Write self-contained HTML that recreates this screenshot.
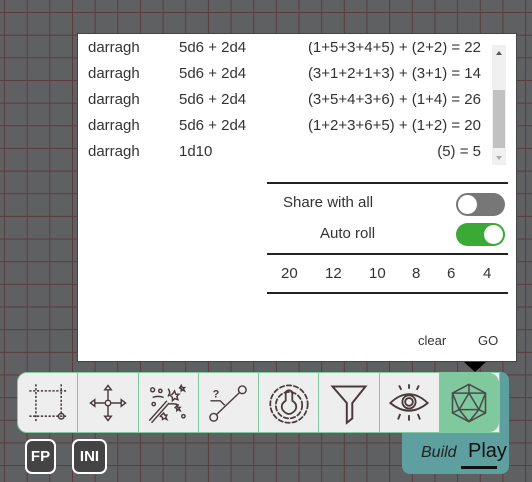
<!DOCTYPE html>
<html><head><meta charset="utf-8"><style>
*{margin:0;padding:0;box-sizing:border-box}
body{width:532px;height:482px;overflow:hidden;position:relative;font-family:"Liberation Sans","DejaVu Sans",sans-serif;color:#333;
background-color:#5f6062;
background-image:linear-gradient(to right,#5a3b3f 1px,transparent 1px),linear-gradient(to bottom,#5a3b3f 1px,transparent 1px);
background-size:22.67px 22.67px;background-position:4px 12px}
.panel{position:absolute;left:77px;top:33px;width:440px;height:329px;background:#fff;border:1px solid #444}
.clip{position:absolute;left:0;top:8px;width:420px;height:130px;overflow:hidden}
.row{position:absolute;left:10px;font-size:15px;height:26px;line-height:26px;width:393px}
.row span{position:absolute}
.c1{left:0}.c2{left:91px}.c3{right:0;text-align:right}
.sb{position:absolute;left:414px;top:11px;width:14px;height:120px;background:#f0f0f0}
.thumb{position:absolute;left:1px;top:45px;width:12px;height:58px;background:#c1c1c1}
.hl{position:absolute;left:189px;width:241px;height:2px;background:#222}
.lab{position:absolute;font-size:15px}
.tg{position:absolute;left:378px;width:49px;height:23px;border-radius:12px}
.tg i{position:absolute;top:2px;width:19px;height:19px;border-radius:50%;background:#fff}
.tb{position:absolute;left:17px;top:372px;width:483px;height:61px;display:flex;border:1px solid #7fc9a0;border-radius:10px 0 0 10px;overflow:hidden;background:#eeeeee}
.tb div{flex:1;border-right:1px solid #7fc9a0;display:flex;align-items:center;justify-content:center}
.tb div:last-child{border:none;background:#80c99e;border-radius:0 10px 10px 0}
.teal{position:absolute;left:402px;top:372px;width:107px;height:102px;background:#5e9fa0;border-radius:8px}
.sq{position:absolute;top:439px;height:35px;border:2px solid #fff;border-radius:7px;background:#444;color:#fff;font-size:15px;font-weight:bold;line-height:31px;text-align:center}
</style></head><body>
<div class="panel">
 <div class="clip">
 <div class="row" style="top:-7px"><span class="c1">darragh</span><span class="c2">5d6 + 2d4</span><span class="c3">(1+5+3+4+5) + (2+2) = 22</span></div>
 <div class="row" style="top:19px"><span class="c1">darragh</span><span class="c2">5d6 + 2d4</span><span class="c3">(3+1+2+1+3) + (3+1) = 14</span></div>
 <div class="row" style="top:45px"><span class="c1">darragh</span><span class="c2">5d6 + 2d4</span><span class="c3">(3+5+4+3+6) + (1+4) = 26</span></div>
 <div class="row" style="top:71px"><span class="c1">darragh</span><span class="c2">5d6 + 2d4</span><span class="c3">(1+2+3+6+5) + (1+2) = 20</span></div>
 <div class="row" style="top:97px"><span class="c1">darragh</span><span class="c2">1d10</span><span class="c3">(5) = 5</span></div>
 </div>
 <div class="sb"><div class="thumb"></div><div style="position:absolute;left:4px;top:6px;border:3px solid transparent;border-bottom:4px solid #555;border-top:0"></div><div style="position:absolute;left:4px;top:111px;border:3px solid transparent;border-top:4px solid #aaa;border-bottom:0"></div></div>
 <div class="hl" style="top:148px"></div>
 <div class="lab" style="left:205px;top:160px">Share with all</div>
 <div class="tg" style="top:159px;background:#777"><i style="left:2px"></i></div>
 <div class="lab" style="left:242px;top:191px">Auto roll</div>
 <div class="tg" style="top:189px;background:#3aa935"><i style="left:28px"></i></div>
 <div class="hl" style="top:219px"></div>
 <div class="lab" style="left:203px;top:231px">20</div>
 <div class="lab" style="left:247px;top:231px">12</div>
 <div class="lab" style="left:291px;top:231px">10</div>
 <div class="lab" style="left:334px;top:231px">8</div>
 <div class="lab" style="left:369px;top:231px">6</div>
 <div class="lab" style="left:405px;top:231px">4</div>
 <div class="hl" style="top:258px"></div>
 <div class="lab" style="left:340px;top:299px;font-size:13px">clear</div>
 <div class="lab" style="left:400px;top:299px;font-size:13px">GO</div>
</div>
<div style="position:absolute;left:464px;top:362px;border:11px solid transparent;border-top:10px solid #000;border-bottom:0"></div>
<div class="teal"></div>
<div class="tb">
 <div><svg width="44" height="44" viewBox="0 0 40 40" fill="none" stroke="#4a3a3c" stroke-width="1.4" stroke-dasharray="2 1.5"><path d="M3 9H37M3 32H37M9 3V38M32 3V29"/><circle cx="32" cy="32" r="2.5" stroke-dasharray="none"/></svg></div>
 <div><svg width="44" height="44" viewBox="0 0 40 40" fill="none" stroke="#4a3a3c" stroke-width="1.3"><circle cx="20" cy="20" r="2.5"/><path d="M20 17V8h-3l3-4 3 4h-3M20 23v9h-3l3 4 3-4h-3M17 20H8v-3l-4 3 4 3v-3M23 20h9v-3l4 3-4 3v-3"/></svg></div>
 <div><svg width="44" height="44" viewBox="0 0 40 40" fill="none" stroke="#4a3a3c" stroke-width="1.3"><path d="M3 36L19 18M5 38L21 20"/><circle cx="6" cy="8" r="1.8"/><circle cx="13" cy="9" r="1.5"/><circle cx="7" cy="21" r="1.5"/><circle cx="34" cy="32" r="1.5"/><path d="M24 12l2-3 1 3 3 0-2 2 1 3-3-1-2 2v-3l-2-2zM14 31l2-2 1 2h2l-1 2 1 2-2-1-2 1v-2l-2-1zM27 24l1-2 1 2h2l-1 1 1 2-2-1-1 1v-2l-2-1zM31 6l1-2 1 2h2l-1 1 1 2-2-1-1 1v-2l-2-1z"/><path d="M20 7q3 3 0 7M21 21q5-1 9 1M6 15q5-2 10 0"/></svg></div>
 <div><svg width="44" height="44" viewBox="0 0 40 40" fill="none" stroke="#4a3a3c" stroke-width="1.3"><circle cx="33" cy="8" r="3.5"/><circle cx="7" cy="33" r="3.5"/><path d="M9 31L31 10M4 18h9l4 4"/><text x="6" y="15" font-size="10" font-weight="bold" fill="#4a3a3c" stroke="none" font-family="Liberation Sans">?</text></svg></div>
 <div><svg width="44" height="44" viewBox="0 0 40 40" fill="none" stroke="#4a3a3c" stroke-width="1.6" stroke-linecap="round" stroke-dasharray="4 2.5"><path d="M17 10v8q-5 3-3 8 3 4 6 4t6-4q2-5-3-8v-8q-3-3-6 0" stroke-dasharray="none"/><circle cx="20" cy="22" r="12"/><circle cx="20" cy="21" r="17"/></svg></div>
 <div><svg width="44" height="44" viewBox="0 0 40 40" fill="none" stroke="#4a3a3c" stroke-width="1.8"><path d="M5 5H35L23 20V34L18 38V20Z"/></svg></div>
 <div><svg width="44" height="44" viewBox="0 0 40 40" fill="none" stroke="#4a3a3c" stroke-width="1.7"><path d="M3 20Q20 4 37 20Q20 34 3 20Z"/><circle cx="20" cy="19" r="6"/><circle cx="20" cy="19" r="3.5"/><path d="M20 3v4M11 4l2 4M29 4l-2 4M20 31v5M12 30l-2 5M28 30l2 5"/></svg></div>
 <div><svg width="44" height="44" viewBox="0 0 40 40" fill="none" stroke="#4a4a4a" stroke-width="1.4"><path d="M20 3L35 11V29L20 37L5 29V11Z"/><path d="M20 11L29 26H11Z"/><path d="M20 3V11M5 11L11 26M35 11L29 26M20 37L11 26M20 37L29 26M5 29L11 26M35 29L29 26M5 11L20 11L35 11"/></svg></div>
</div>
<div class="sq" style="left:25px;width:31px">FP</div>
<div class="sq" style="left:72px;width:35px">INI</div>
<div style="position:absolute;left:421px;top:444px;font-size:16px;font-style:italic;color:#222">Build</div>
<div style="position:absolute;left:468px;top:440px;font-size:20px;color:#111">Play</div>
<div style="position:absolute;left:461px;top:466px;width:36px;height:3px;background:#111"></div>
</body></html>
